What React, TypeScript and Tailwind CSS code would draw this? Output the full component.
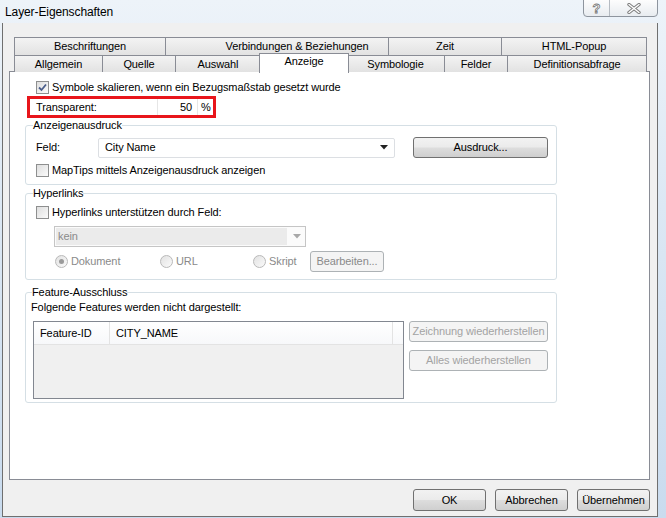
import React from "react";

const tabsTop: [string, number, number][] = [
  ["Beschriftungen", 152, 0],
  ["Verbindungen & Beziehungen", 224, 40],
  ["Zeit", 114, 0],
  ["HTML-Popup", 146, 0],
];
const tabsBottom: [string, number, number][] = [
  ["Allgemein", 89, 0],
  ["Quelle", 74, 0],
  ["Auswahl", 86, 0],
  ["Anzeige", 87, 0],
  ["Symbologie", 99, 0],
  ["Felder", 64, 0],
  ["Definitionsabfrage", 140, 0],
];

const btn =
  "flex items-center justify-center rounded-[3px] border border-[#707070] bg-[linear-gradient(#f2f2f2_0%,#ebebeb_48%,#dddddd_52%,#cfcfcf_100%)] text-black";
const btnOff =
  "flex items-center justify-center rounded-[3px] border border-[#adb2b5] bg-[#f4f4f4] text-[#a3a3a3]";

function Check({ on }: { on?: boolean }) {
  return (
    <span className="flex h-[13px] w-[13px] shrink-0 items-center justify-center border border-[#8e8f8f] bg-[linear-gradient(135deg,#dedede,#fbfbfb)]">
      {on && (
        <svg width="11" height="11" viewBox="0 0 11 11">
          <path d="M2 5.5 L4.5 8 L9 2.5" fill="none" stroke="#4a5d8a" strokeWidth="1.8" />
        </svg>
      )}
    </span>
  );
}

function Radio({ on }: { on?: boolean }) {
  return (
    <span className="flex h-[13px] w-[13px] shrink-0 items-center justify-center rounded-full border border-[#b9b9b9] bg-[linear-gradient(135deg,#e2e2e2,#fafafa)]">
      {on && <span className="h-[5px] w-[5px] rounded-full bg-[#9a9a9a]" />}
    </span>
  );
}

function Tab({ label, w, pad, sel, first }: { label: string; w: number; pad: number; sel?: boolean; first?: boolean }) {
  if (sel) {
    return (
      <div
        style={{ width: w + 3 }}
        className="relative z-10 -mb-[1px] -ml-[2px] -mr-[2px] flex h-[20px] shrink-0 items-start justify-center border border-b-0 border-[#898c95] bg-white pt-[1px]"
      >
        {label}
      </div>
    );
  }
  return (
    <div
      style={{ width: w, paddingLeft: pad }}
      className={`flex h-full shrink-0 items-center justify-center border border-b-0 border-[#898c95] bg-[linear-gradient(#f3f3f3,#e2e2e2)] ${first ? "" : "-ml-px"}`}
    >
      {label}
    </div>
  );
}

export default function App() {
  return (
    <div className="h-[518px] w-[666px] overflow-hidden bg-[linear-gradient(180deg,#edf3f9,#dce8f4_40%,#c9dbee)] text-[11px] leading-[13px] tracking-[-0.1px] text-black [font-family:'Liberation_Sans',Arial,sans-serif]">
      {/* title bar */}
      <div className="flex h-[23px] items-start">
        <div className="pl-[5px] pt-[5px] text-[12px] leading-[14px]">Layer-Eigenschaften</div>
        <div className="ml-auto mr-[8px] flex h-[18px] -mt-px rounded-b-[4px] border border-[#8e959e] bg-[linear-gradient(#fdfdfd,#e8ecf0)]">
          <div className="flex w-[26px] items-center justify-center border-r border-[#b5bbc2] text-[13px] font-bold text-white [-webkit-text-stroke:0.8px_#777]">
            ?
          </div>
          <div className="flex w-[47px] items-center justify-center">
            <svg width="14" height="11" viewBox="0 0 14 11">
              <path d="M2 1.5 L12 9.5 M12 1.5 L2 9.5" stroke="#7d7d7d" strokeWidth="3.4" strokeLinecap="round" />
              <path d="M2 1.5 L12 9.5 M12 1.5 L2 9.5" stroke="#ffffff" strokeWidth="1.4" strokeLinecap="round" />
            </svg>
          </div>
        </div>
      </div>

      {/* client area */}
      <div className="ml-[2px] h-[494px] w-[656px] border border-t-0 border-[#6f6f6f] bg-[#f0f0f0] pl-[6px] pt-[14px]">
        <div className="ml-[5px] flex h-[18px]">
          {tabsTop.map(([l, w, p], i) => (
            <Tab key={l} label={l} w={w} pad={p} first={i === 0} />
          ))}
        </div>
        <div className="ml-[5px] flex h-[17px] items-end">
          {tabsBottom.map(([l, w, p], i) => (
            <Tab key={l} label={l} w={w} pad={p} first={i === 0} sel={l === "Anzeige"} />
          ))}
        </div>

        {/* panel */}
        <div className="-mt-px h-[409px] w-[641px] border border-[#898c95] bg-white">
          <div className="ml-[26px] mt-[9px] flex items-center gap-[3px]">
            <Check on />
            <span>Symbole skalieren, wenn ein Bezugsmaßstab gesetzt wurde</span>
          </div>

          <div className="ml-[17px] mt-[2px] flex h-[22px] w-[189px] items-center border-[3px] border-[#e8151b] bg-white">
            <span className="w-[127px] pl-[6px]">Transparent:</span>
            <span className="flex h-full w-[41px] items-center justify-end border-x border-[#e6e6e6] pr-[5px]">50</span>
            <span className="pl-[3px]">%</span>
          </div>

          {/* Anzeigenausdruck */}
          <fieldset className="ml-[15px] h-[67px] w-[532px] rounded-[3px] border border-[#d5dfe5] px-[7px]">
            <legend className="px-0 leading-[14px]">Anzeigenausdruck</legend>
            <div className="mt-[5px] flex h-[21px] items-center">
              <span className="ml-[3px] w-[62px]">Feld:</span>
              <div className="flex h-[20px] w-[297px] items-center rounded-[2px] border border-[#dcdfe3] bg-white pl-[6px] pr-[6px]">
                <span>City Name</span>
                <svg className="ml-auto" width="8" height="5" viewBox="0 0 8 5">
                  <path d="M0 0 H8 L4 4.5 Z" fill="#222" />
                </svg>
              </div>
              <div className={`${btn} ml-[18px] h-[21px] w-[135px]`}>Ausdruck...</div>
            </div>
            <div className="ml-[3px] mt-[6px] flex items-center gap-[3px]">
              <Check />
              <span>MapTips mittels Anzeigenausdruck anzeigen</span>
            </div>
          </fieldset>

          {/* Hyperlinks */}
          <fieldset className="ml-[15px] mt-px h-[94px] w-[532px] rounded-[3px] border border-[#d5dfe5] px-[7px]">
            <legend className="px-0 leading-[14px]">Hyperlinks</legend>
            <div className="ml-[3px] mt-[6px] flex items-center gap-[3px]">
              <Check />
              <span>Hyperlinks unterstützen durch Feld:</span>
            </div>
            <div className="ml-[21px] mt-[7px] flex h-[21px] w-[252px] items-center border border-[#c5c5c5] bg-[#fbfbfb] p-[1px]">
              <div className="flex h-full w-[231px] items-center bg-[#ebebeb] pl-[2px] text-[#8a8a8a]">kein</div>
              <svg className="ml-[6px]" width="8" height="5" viewBox="0 0 8 5">
                <path d="M0 0 H8 L4 4.5 Z" fill="#a8a8a8" />
              </svg>
            </div>
            <div className="ml-[22px] mt-[4px] flex h-[21px] items-center text-[#8a8a8a]">
              <div className="flex w-[105px] items-center gap-[3px]">
                <Radio on />
                <span>Dokument</span>
              </div>
              <div className="flex w-[93px] items-center gap-[3px]">
                <Radio />
                <span>URL</span>
              </div>
              <div className="flex w-[57px] items-center gap-[3px]">
                <Radio />
                <span>Skript</span>
              </div>
              <div className={`${btnOff} h-[21px] w-[74px] !text-[#8a8a8a]`}>Bearbeiten...</div>
            </div>
          </fieldset>

          {/* Feature-Ausschluss */}
          <fieldset className="ml-[15px] mt-[5px] h-[118px] w-[532px] rounded-[3px] border border-[#d5dfe5] px-[5px]">
            <legend className="ml-[1px] px-0 leading-[14px]">Feature-Ausschluss</legend>
            <div className="mt-[2px]">Folgende Features werden nicht dargestellt:</div>
            <div className="mt-[6px] flex items-start">
              <div className="ml-[2px] mt-[1px] h-[78px] w-[371px] border border-[#828790] bg-[#f0f0f0]">
                <div className="flex h-[23px] border-b border-[#e3e3e3] bg-[linear-gradient(#ffffff,#f7f8fa)]">
                  <div className="flex w-[76px] items-center border-r border-[#e3e3e3] pl-[6px]">Feature-ID</div>
                  <div className="flex w-[283px] items-center border-r border-[#e3e3e3] pl-[6px]">CITY_NAME</div>
                </div>
              </div>
              <div className="ml-[5px] flex flex-col gap-[8px] pt-[1px]">
                <div className={`${btnOff} h-[21px] w-[139px]`}>Zeichnung wiederherstellen</div>
                <div className={`${btnOff} h-[21px] w-[139px]`}>Alles wiederherstellen</div>
              </div>
            </div>
          </fieldset>
        </div>

        {/* dialog buttons */}
        <div className="mt-[9px] flex w-[641px] justify-end gap-[9px]">
          <div className={`${btn} h-[22px] w-[73px]`}>OK</div>
          <div className={`${btn} h-[22px] w-[73px]`}>Abbrechen</div>
          <div className={`${btn} h-[22px] w-[73px]`}>Übernehmen</div>
        </div>
      </div>
    </div>
  );
}
